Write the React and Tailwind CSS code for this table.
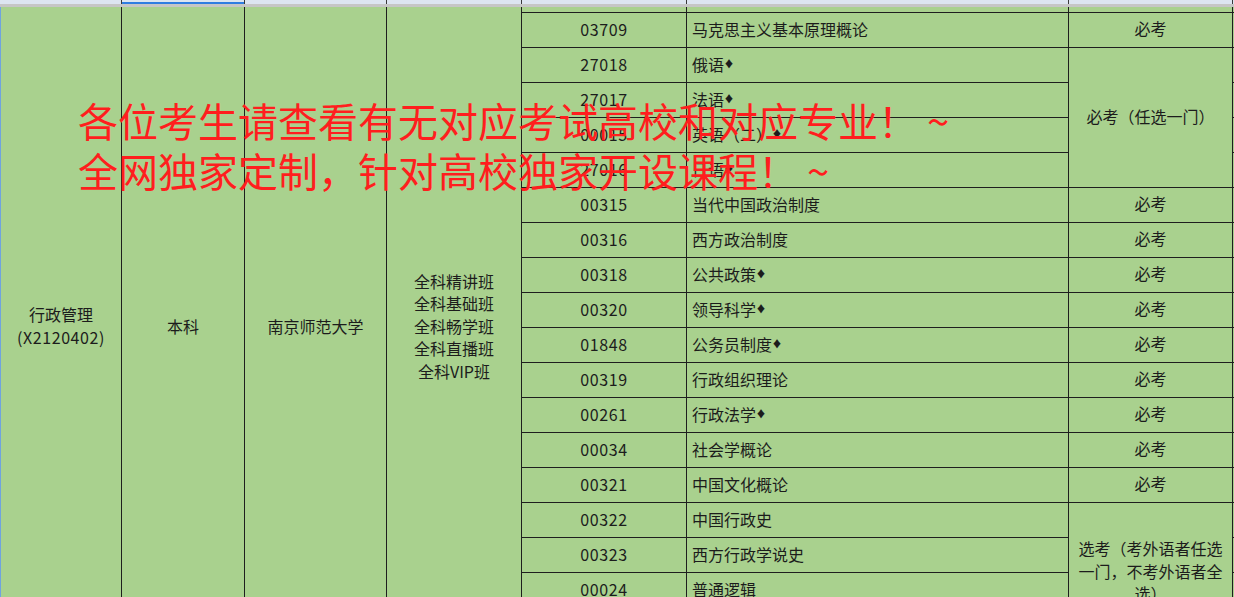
const rows = [
  { code: "03709", name: "马克思主义基本原理概论", exam: "必考" },
  { code: "27018", name: "俄语", mark: true, exam: "必考（任选一门）", span: 4 },
  { code: "27017", name: "法语", mark: true },
  { code: "00015", name: "英语（二）", mark: true },
  { code: "27016", name: "日语", mark: true },
  { code: "00315", name: "当代中国政治制度", exam: "必考" },
  { code: "00316", name: "西方政治制度", exam: "必考" },
  { code: "00318", name: "公共政策", mark: true, exam: "必考" },
  { code: "00320", name: "领导科学", mark: true, exam: "必考" },
  { code: "01848", name: "公务员制度", mark: true, exam: "必考" },
  { code: "00319", name: "行政组织理论", exam: "必考" },
  { code: "00261", name: "行政法学", mark: true, exam: "必考" },
  { code: "00034", name: "社会学概论", exam: "必考" },
  { code: "00321", name: "中国文化概论", exam: "必考" },
  { code: "00322", name: "中国行政史", exam: "选考", span: 4 },
  { code: "00323", name: "西方行政学说史" },
  { code: "00024", name: "普通逻辑" },
  { code: "00312", name: "政治学概论" },
];

const cell = "bg-[#a9d18e]";

function ExamCell({ row }) {
  if (!row.exam) return null;
  const spanClass = row.span === 4 ? "row-span-4" : "";
  return (
    <div className={`${cell} ${spanClass} col-start-7 flex items-center justify-center pb-[3px] text-center leading-[22.5px]`}>
      {row.exam === "选考" ? (
        <span>
          选考（考外语者任选
          <br />
          一门，不考外语者全
          <br />
          选）
        </span>
      ) : (
        row.exam
      )}
    </div>
  );
}

export default function App() {
  return (
    <div
      className="relative h-[597px] w-[1234px] overflow-hidden bg-[#a9d18e] text-[16px] text-[#1c1c1c]"
      style={{ fontFamily: '"Noto Sans CJK SC", "Noto Sans", sans-serif' }}
    >
      {/* column header strip */}
      <div className="grid h-[4px] grid-cols-[121px_122px_141px_134px_164px_381px_163px_20px] gap-x-px bg-[#3a3a3a]">
        <div className="bg-[#dde5f1]" />
        <div className="border-b-2 border-[#2f7de1] bg-[#dde5f1]" />
        <div className="bg-[#dde5f1]" />
        <div className="bg-[#dde5f1]" />
        <div className="bg-[#dde5f1]" />
        <div className="bg-[#dde5f1]" />
        <div className="bg-[#dde5f1]" />
        <div className="bg-[#dde5f1]" />
      </div>
      <div className="h-[3px] bg-[#c6c6c6]" />

      {/* sheet body */}
      <div className="grid grid-cols-[121px_122px_141px_134px_164px_381px_163px_20px] grid-rows-[5px_repeat(18,34px)] gap-px bg-[#1e1e1e]">
        <div className={`${cell} row-span-19 col-start-1 flex items-center justify-center border-l border-[#6fa3e0] pt-[3px] text-center leading-[23px]`}>
          <span>
            行政管理
            <br />
            <span className="tracking-[0.6px]">(X2120402)</span>
          </span>
        </div>
        <div className={`${cell} row-span-19 col-start-2 flex items-center justify-center pt-[3px]`}>本科</div>
        <div className={`${cell} row-span-19 col-start-3 flex items-center justify-center pt-[3px]`}>南京师范大学</div>
        <div className={`${cell} row-span-19 col-start-4 flex items-center justify-center pt-[3px] text-center leading-[22.5px]`}>
          <span>
            全科精讲班
            <br />
            全科基础班
            <br />
            全科畅学班
            <br />
            全科直播班
            <br />
            全科VIP班
          </span>
        </div>

        <div className={`${cell} col-start-5`} />
        <div className={`${cell} col-start-6`} />
        <div className={`${cell} col-start-7`} />
        <div className={`${cell} col-start-8`} />

        {rows.map((row) => (
          <div key={row.code} className="contents">
            <div className={`${cell} col-start-5 flex items-center justify-center pb-[3px] tracking-[0.6px]`}>{row.code}</div>
            <div className={`${cell} col-start-6 flex items-center pb-[3px] pl-[5px]`}>
              {row.name}
              {row.mark && <span className="text-[10px] leading-none">♦</span>}
            </div>
            <ExamCell row={row} />
            <div className={`${cell} col-start-8`} />
          </div>
        ))}
      </div>

      {/* red notice over the sheet */}
      <div className="absolute left-[78px] top-[95px] text-[40px] leading-[50px] text-[#ff1e1e]">
        <p>各位考生请查看有无对应考试高校和对应专业！ ~</p>
        <p>全网独家定制，针对高校独家开设课程！ ~</p>
      </div>
    </div>
  );
}
